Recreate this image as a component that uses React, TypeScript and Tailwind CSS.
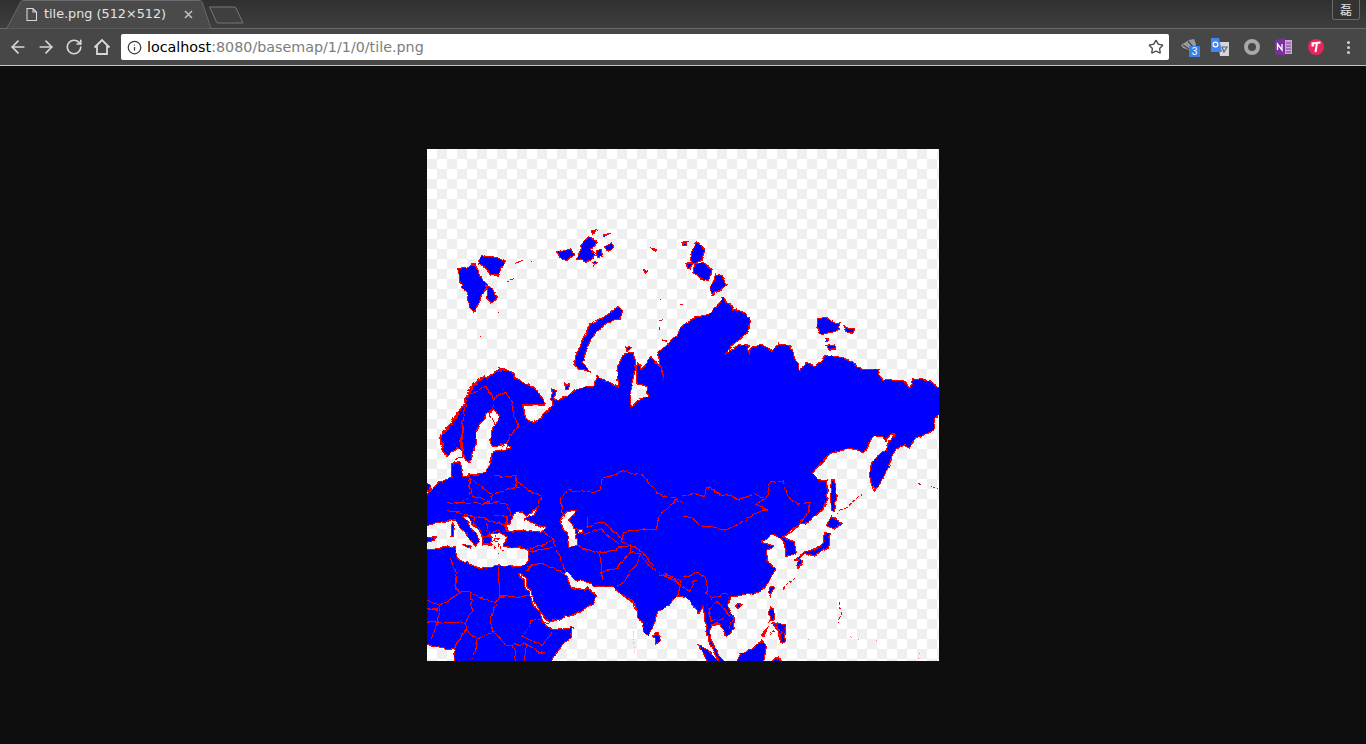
import { ArrowLeft, ArrowRight, RotateCw, Star, Info } from 'lucide-react';

// coordinates are 3x the tile's pixels (1536 = 512px)
const LAND = `M110 768 L125 730 L150 695 L190 675 L215 660 L240 660 L262 685 L300 705 L330 725 L348 750 L352 768
L285 768 L300 808 L320 818 L345 803 L378 768 L370 720 L385 725 L380 745 L392 755 L420 740 L470 712 L500 715 L510 680 L530 695 L575 715 L570 660 L590 612 L620 610 L625 660 L610 720 L612 773
L622 770 L640 745 L665 745 L660 712 L630 705 L628 640 L645 660 L672 625 L700 650 L710 685 L700 640 L690 610 L725 580 L745 560 L768 528
L793 510 L848 495 L868 470 L888 445 L908 460 L918 485 L953 490 L973 520 L958 555 L918 590 L898 612 L938 590 L963 585 L968 615 L973 590 L1008 590 L1038 605 L1053 585 L1088 590 L1103 630 L1120 668 L1133 640 L1168 650 L1193 620 L1248 625 L1288 650 L1303 662 L1353 662 L1368 695 L1428 695 L1448 715 L1458 688 L1498 690 L1552 722
L1552 788 L1523 808 L1523 843 L1468 868 L1448 893 L1418 888 L1396 918 L1388 953 L1368 988 L1343 1026 L1330 978 L1333 938 L1378 898 L1403 853 L1393 856 L1378 880 L1363 863 L1338 863 L1313 908 L1268 898 L1213 913 L1153 973 L1173 993 L1198 990 L1203 1048 L1183 1088 L1153 1113 L1118 1128 L1068 1163
L1098 1178 L1106 1213 L1078 1223 L1076 1188 L1063 1168 L1038 1156 L1003 1176 L1023 1186 L1043 1188 L1018 1208 L1023 1238 L1043 1263 L1028 1298 L1003 1328 L958 1338 L913 1343 L898 1368 L923 1408 L923 1438 L898 1460 L878 1428 L853 1428 L850 1468 L868 1503 L895 1555 L883 1555 L848 1483 L836 1428 L828 1373 L813 1398 L793 1358 L768 1343
L750 1343 L730 1368 L690 1393 L680 1428 L665 1463 L650 1448 L620 1358 L600 1348 L560 1313 L510 1313 L480 1303 L450 1293 L420 1266 L412 1273 L430 1313 L470 1323 L480 1313 L510 1338 L490 1368 L440 1398 L400 1408 L370 1418 L340 1388 L315 1338 L285 1273 L278 1273 L310 1343 L340 1398 L365 1433 L375 1446 L436 1436 L430 1463 L400 1498 L355 1555 L85 1555 L80 1503 L40 1498 L-20 1480
L-20 1205 L85 1193 L95 1233 L160 1258 L215 1248 L280 1253 L300 1238 L305 1205 L290 1198 L230 1193 L240 1163 L195 1153 L190 1188 L170 1188 L165 1153 L120 1103 L108 1098 L145 1153 L160 1178 L145 1188 L105 1138 L85 1113 L75 1113 L30 1123 L-20 1140
L-20 1050 L18 1020 L35 998 L75 990 L70 943 L100 938 L108 980 L170 973 L195 933 L195 913 L250 893 L235 883 L200 898 L185 873 L215 808 L205 783 L180 793 L150 843 L148 883 L130 938 L115 928 L100 903 L90 896 L60 923 L45 903 L40 863 L50 853 Z
M240 1133 L265 1093 L288 1088 L300 1103 L330 1078 L320 1098 L292 1113 L330 1128 L355 1138 L345 1150 L290 1143 L240 1148 Z
M400 1108 L420 1088 L450 1083 L445 1098 L425 1113 L445 1138 L450 1168 L452 1193 L425 1193 L420 1153 L405 1130 Z
M452 1140 L465 1143 L466 1155 L455 1152 Z`;

const ISLANDS = `M92 355 L118 352 L132 345 L145 345 L160 385 L185 410 L170 430 L155 470 L140 490 L120 450 L125 430 L105 420 Z
M155 345 L165 320 L208 325 L235 340 L215 378 L190 378 L178 360 Z
M178 410 L198 425 L212 445 L195 462 L180 450 Z
M385 312 L410 302 L435 300 L440 315 L420 335 L410 335 Z M462 290 L490 265 L510 280 L490 300 L505 320 L480 340 L452 330 Z
M505 305 L525 300 L530 322 L510 325 Z M535 295 L550 282 L560 295 L545 310 Z M493 245 L508 248 L498 255 Z M672 295 L688 298 L680 305 Z M650 362 L662 368 L655 372 Z M530 255 L545 255 L535 262 Z M495 340 L512 340 L500 350 Z
M575 475 L587 485 L572 510 L535 525 L505 555 L480 600 L465 640 L490 672 L455 662 L440 640 L465 575 L490 525 L545 495 Z
M412 705 L428 705 L425 718 L412 718 Z M598 594 L610 598 L600 605 Z`;

const ISLANDS_TR = `M28 300 L45 280 L65 305 L55 335 L35 345 L20 335 Z M35 345 L70 340 L85 370 L75 398 L50 390 L30 370 Z
M100 375 L115 380 L130 405 L115 420 L85 435 L82 420 Z M8 345 L30 345 L22 360 L10 358 Z M0 282 L12 282 L10 290 L0 290 Z
M405 510 L430 505 L450 520 L470 522 L465 545 L420 555 L402 535 Z M480 530 L515 540 L510 552 L490 548 Z M428 570 L436 570 L434 578 L428 578 Z M430 590 L455 585 L458 600 L440 600 Z`;

const ISLANDS_BR = `M445 225 L455 225 L460 280 L455 320 L445 320 L442 270 Z
M445 335 L475 352 L455 372 L430 362 Z M425 385 L442 385 L435 430 L395 450 L365 448 L345 465 L335 465 L370 440 L415 425 Z
M345 465 L355 470 L345 490 L340 475 Z M262 545 L272 550 L262 575 L256 565 Z M165 592 L178 598 L165 610 L158 600 Z
M262 605 L275 612 L275 640 L258 645 Z M270 650 L305 660 L310 710 L295 715 L285 680 Z M235 690 L260 665 L240 695 Z
M45 722 L70 730 L118 785 L88 785 Z M155 785 L170 745 L210 735 L232 708 L248 725 L235 785 Z M255 785 L285 758 L300 785 Z`;

const ISLANDS_BL = `M680 690 L690 685 L698 710 L685 718 Z M75 358 L82 365 L78 398 L72 395 Z M108 420 L130 418 L128 430 Z M-20 400 L30 395 L15 408 L-20 410 Z M-20 232 L15 240 L10 258 L-20 262 Z`;

const BORDERS = `M110 768 L118 740 L180 710 L200 750 L240 730 L255 768
M255 768 L262 785 L260 805 L270 830 L240 880 L235 900 M200 768 L190 800 L205 830 L200 840 M118 768 L105 830 L105 920 L85 935 L75 950
M200 980 L265 983 L280 1008 L340 1045 L330 1078 M265 983 L270 1015 L198 1035 L190 1060 L130 1033 L105 1060 M125 985 L130 1032 M195 1035 L125 985
M60 1060 L130 1065 L195 1060 L240 1065 L250 1100 M115 1095 L140 1105 L175 1110 L240 1130 L240 1100 L200 1100 M145 1120 L165 1150 L175 1165 L210 1145 L235 1150 M140 1105 L145 1135 M175 1110 L180 1150 M190 1150 L195 1175 L220 1170 M60 1085 L105 1090
M400 1050 L425 1020 L470 1030 L520 1025 L525 988 L600 965 L650 982 L690 1030 L745 1050 L768 1060 M400 1050 L405 1090 L415 1105 M745 1053 L712 1085 L690 1115 L688 1140 L625 1145 L590 1152 L580 1175 L612 1188 L650 1210 L680 1258 L700 1270 L768 1300 M480 1105 L480 1135 L530 1120 L570 1155 L582 1170 M470 1160 L520 1140 L590 1200
M452 1192 L520 1215 L610 1185 L610 1210 L570 1258 L525 1272 L520 1215 M530 1290 L525 1272 M610 1210 L640 1215 L620 1258 L590 1300 L570 1312 M640 1215 L680 1268 M700 1275 L760 1305 L750 1345
M345 1145 L380 1170 L390 1200 L405 1240 L420 1265 M380 1170 L350 1190 L310 1200 M305 1208 L380 1195 M300 1250 L345 1243 L380 1260 L415 1272 M300 1265 L320 1245
M215 1253 L215 1343 L315 1343 M88 1270 L85 1320 L100 1330 L130 1330 L205 1365 L215 1343 M70 1230 L85 1270 M0 1350 L40 1370 L100 1330 M130 1330 L135 1380 L115 1420 L120 1440 L150 1470 L200 1450 M205 1365 L190 1420 L200 1450 L240 1490 L290 1485 L350 1515 M290 1460 L315 1410 L365 1420 M285 1460 L350 1490 L375 1450 M0 1420 L35 1420 L60 1420 L115 1420 M0 1380 L30 1380 L40 1370 L30 1420 L15 1470 M120 1440 L90 1480 L80 1500 M150 1470 L135 1536 M260 1490 L265 1536 M295 1490 L295 1536`;

const BORDERS_BR = `M0 270 L30 265 L65 275 L70 250 L100 260 L110 270 L150 275 L170 285 L215 270 L250 278 L262 230 L300 230 L320 280 L350 300 L380 295 L375 325 L350 360
M0 330 L30 340 L50 362 L125 375 L185 350 L190 340 L240 315 L255 315 L215 300 L250 278
M0 515 L40 505 L70 520 L70 560 L85 580 L130 565 L145 580 M0 545 L20 560 L30 530 L40 525 M75 610 L105 590 L120 610 L150 640 L135 670 M75 610 L85 650 L105 650 L125 640 M300 395 L325 385 L340 370`;

function MapTile() {
  return (
    <svg viewBox="0 0 1536 1536" className="block h-[512px] w-[512px]" shapeRendering="crispEdges">
      <defs>
        <filter id="rough" x="-30" y="-30" width="1600" height="1600" filterUnits="userSpaceOnUse" primitiveUnits="userSpaceOnUse">
          <feTurbulence type="fractalNoise" baseFrequency="0.035" numOctaves="2" seed="4" result="n" />
          <feDisplacementMap in="SourceGraphic" in2="n" scale="16" xChannelSelector="R" yChannelSelector="G" />
        </filter>
      </defs>
      <g filter="url(#rough)">
        <path d={LAND} fill="#0000ff" stroke="#ff0000" strokeWidth="3.4" fillRule="evenodd" strokeLinejoin="round" />
        <path d={ISLANDS} fill="#0000ff" stroke="#ff0000" strokeWidth="3.4" />
        <g transform="translate(768 0)">
          <path d={ISLANDS_TR} fill="#0000ff" stroke="#ff0000" strokeWidth="3.4" />
        </g>
        <g transform="translate(768 768)">
          <path d={ISLANDS_BR} fill="#0000ff" stroke="#ff0000" strokeWidth="3.4" />
          <path d={BORDERS_BR} fill="none" stroke="#ff0000" strokeWidth="3.2" />
          <path d="M265 650 L300 690 M280 655 L295 700 M262 690 L290 670" fill="none" stroke="#ff0000" strokeWidth="5" strokeDasharray="6 5" />
          <path d="M540 268 L470 318 L450 345 M650 200 L662 210 M705 235 L718 240 M745 245 L768 255 M340 515 L300 550 M470 590 L475 630 L465 652" fill="none" stroke="#ff0000" strokeWidth="3" strokeDasharray="9 6" />
          <path d="M500 695 L530 705 M580 708 L585 710 M378 705 L380 708 M705 745 L710 768" fill="none" stroke="#ff8080" strokeWidth="3" strokeDasharray="3 9" />
        </g>
        <g transform="translate(0 768)">
          <path d={ISLANDS_BL} fill="#0000ff" stroke="#ff0000" strokeWidth="3.4" />
          <path d="M195 395 L230 440 M205 385 L220 425 M190 410 L215 445" fill="none" stroke="#ff0000" strokeWidth="5" strokeDasharray="4 6" />
          <path d="M620 670 L618 700 L625 750" fill="none" stroke="#ffb0b0" strokeWidth="3" strokeDasharray="3 6" />
        </g>
        <path d={BORDERS} fill="none" stroke="#ff0000" strokeWidth="3.2" />
        <path d="M45 900 L40 863 L50 853 L110 768 L125 730 L150 695 L190 675 L230 662" fill="none" stroke="#ff0000" strokeWidth="8" strokeDasharray="7 3" />
        <path d="M268 340 L285 333 M240 398 L258 392 M225 405 L228 408 M160 562 L163 565 M312 337 L314 337 M212 490 L216 488 M700 455 L703 455 M760 468 L766 465 M697 515 L708 512 M698 540 L700 530 M705 573 L720 575" fill="none" stroke="#ff0000" strokeWidth="3" />
      </g>
    </svg>
  );
}

function Tab() {
  return (
    <div className="relative flex h-[29px] w-[205px] shrink-0 items-center pl-[19px]">
      <svg className="absolute left-0 top-0" width="205" height="29" viewBox="0 0 205 29">
        <path d="M0.5 29 L15 1.5 Q16 0.5 18 0.5 L193 0.5 Q195 0.5 196 1.5 L205 29 Z" fill="#4a4a4a" stroke="#6a6a6a" />
      </svg>
      <svg className="relative mr-[6px]" width="13" height="15" viewBox="0 0 13 15" fill="none" stroke="#d8d8d8" strokeWidth="1.1">
        <path d="M2 1.5 H8 L11.5 5 V13.5 H2 Z M8 1.5 V5 H11.5" />
      </svg>
      <span className="relative font-['DejaVu_Sans',sans-serif] text-[12.8px] leading-none text-[#e4e4e4]">tile.png (512×512)</span>
      <svg className="absolute left-[178px] top-[10px]" width="9" height="9" viewBox="0 0 9 9" stroke="#bdbdbd" strokeWidth="1.6">
        <path d="M1 1 L8 8 M8 1 L1 8" />
      </svg>
    </div>
  );
}

function Toolbar() {
  return (
    <div className="flex h-[37px] items-center border-b border-[#c4c4c4] bg-[#474747]">
      <div className="flex w-[121px] shrink-0 items-center gap-[8px] pl-[8px] text-[#d8d8d8]">
        <ArrowLeft size={20} strokeWidth={2} />
        <ArrowRight size={20} strokeWidth={2} />
        <RotateCw size={18} strokeWidth={2.2} className="mx-px" />
        <svg width="20" height="20" viewBox="0 0 20 20" fill="none" stroke="#d8d8d8" strokeWidth="1.8">
          <path d="M2.5 10.5 L10 3 L17.5 10.5 M5 8.5 V17 H15 V8.5" />
        </svg>
      </div>
      <div className="flex h-[26px] w-[1048px] shrink-0 items-center rounded-[2px] bg-white pl-[6px] pr-[5px] font-['DejaVu_Sans',sans-serif] text-[14.3px]">
        <Info size={15} strokeWidth={2} className="mr-[5px] text-[#3a3a3a]" />
        <span className="pt-px text-black">localhost</span>
        <span className="pt-px text-[#7d7d7d]">:8080/basemap/1/1/0/tile.png</span>
        <Star size={16} strokeWidth={2} className="ml-auto text-[#4a4a4a]" />
      </div>
      <div className="flex flex-1 items-center pl-[11px]">
        <div className="relative mr-[10px] h-[20px] w-[20px]">
          <svg width="20" height="20" viewBox="0 0 20 20">
            <path d="M1 8 L9 3 L14 2 L16 7 L15 13 L9 13 L3 11 Z" fill="#9a9a9a" />
            <path d="M3 8 L9 12 M8 4 L13 10" stroke="#474747" strokeWidth="1.2" />
          </svg>
          <span className="absolute left-[9px] top-[9px] flex h-[11px] w-[11px] items-center justify-center bg-[#3b82e8] font-['Liberation_Sans',sans-serif] text-[10px] leading-none text-white">3</span>
        </div>
        <svg className="mr-[12px]" width="20" height="20" viewBox="0 0 20 20">
          <path d="M8 5 H19 V19 H10 Z" fill="#d6d6d6" />
          <path d="M12 10 L17 10 L14 15 Z" fill="none" stroke="#5a6a70" strokeWidth="1.2" />
          <path d="M1 1 H9 L12 15 H1 Z" fill="#4285f4" />
          <circle cx="5.5" cy="7.5" r="2.4" fill="none" stroke="#fff" strokeWidth="1.2" />
        </svg>
        <svg className="mr-[12px]" width="20" height="20" viewBox="0 0 20 20">
          <circle cx="10" cy="10" r="6" fill="none" stroke="#a8a8a8" strokeWidth="4" />
        </svg>
        <svg className="mr-[12px]" width="20" height="20" viewBox="0 0 20 20">
          <path d="M10 3 H18 V17 H10 Z" fill="#c9a7e0" />
          <path d="M12 6 H17 M12 9 H17 M12 12 H17 M12 15 H17" stroke="#80397b" strokeWidth="1.2" />
          <path d="M1 3 L11 1 V19 L1 17 Z" fill="#7b2fa0" />
          <path d="M3.5 13 V7 L8 13 V7" fill="none" stroke="#fff" strokeWidth="1.3" />
        </svg>
        <svg className="mr-[12px]" width="20" height="20" viewBox="0 0 20 20">
          <circle cx="10" cy="10" r="8" fill="#e8265e" />
          <path d="M5.5 6.5 L14.5 5.5 M11 6 L9.5 15 M5.5 8.5 H8" stroke="#fff" strokeWidth="2" fill="none" />
        </svg>
        <div className="flex w-[20px] flex-col items-center gap-[2px]">
          <span className="h-[3px] w-[3px] rounded-full bg-[#d0d0d0]" />
          <span className="h-[3px] w-[3px] rounded-full bg-[#d0d0d0]" />
          <span className="h-[3px] w-[3px] rounded-full bg-[#d0d0d0]" />
        </div>
      </div>
    </div>
  );
}

export default function App() {
  return (
    <div className="flex h-screen flex-col overflow-hidden bg-[#0e0e0e]">
      <div className="relative flex h-[29px] shrink-0 items-end border-b border-[#6a6a6a] bg-gradient-to-b from-[#303030] to-[#3e3e3e] pl-[6px]">
        <div className="-mb-px flex items-start">
          <Tab />
          <svg className="ml-[-3px] mt-[6px]" width="36" height="18" viewBox="0 0 36 18" fill="#3f3f3f" stroke="#777777">
            <path d="M1.5 1 H26 Q27 1 28 2 L35 17 H10 Q9 17 8.5 16 Z" />
          </svg>
        </div>
        <div className="absolute right-[6px] top-0 flex h-[20px] w-[28px] items-center justify-center rounded-b-[3px] border border-t-0 border-[#6a6a6a] bg-[#333333] font-['Noto_Sans_CJK_SC',sans-serif] text-[12px] leading-none text-[#e0e0e0]">
          磊
        </div>
      </div>
      <Toolbar />
      <div className="flex flex-1 items-center justify-center">
        <div className="bg-[repeating-conic-gradient(#efefef_0_25%,#ffffff_0_50%)] bg-[length:20px_20px]">
          <MapTile />
        </div>
      </div>
    </div>
  );
}
